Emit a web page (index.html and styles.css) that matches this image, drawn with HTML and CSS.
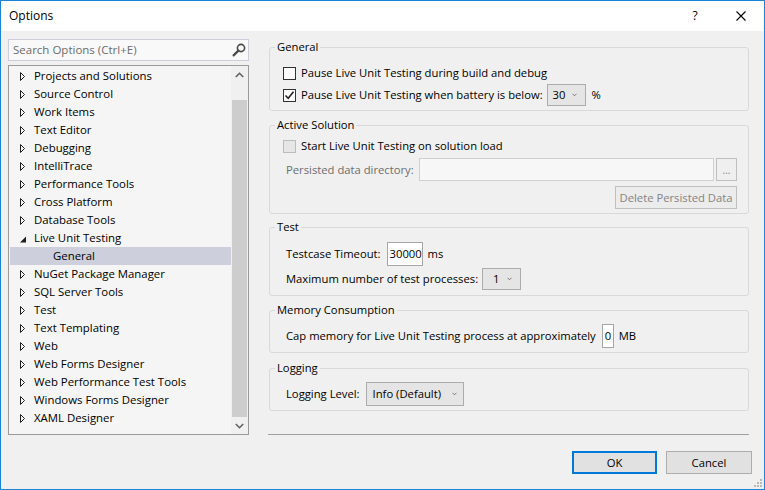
FILE: index.html
```html
<!DOCTYPE html>
<html>
<head>
<meta charset="utf-8">
<title>Options</title>
<link rel="stylesheet" href="styles.css">
</head>
<body>
<div class="window">
  <div class="titlebar">
    <span class="title">Options</span>
    <div class="caption-btns">
      <span class="cap-btn help">?</span>
      <span class="cap-btn">
        <svg width="10" height="10" viewBox="0 0 10 10"><path d="M0.5 0.5L9.5 9.5M9.5 0.5L0.5 9.5" stroke="#000" stroke-width="1.1" fill="none"/></svg>
      </span>
    </div>
  </div>

  <div class="content">
    <div class="main">
      <div class="left">
        <div class="search">
          <span class="placeholder">Search Options (Ctrl+E)</span>
          <svg class="search-icon" width="14" height="14" viewBox="0 0 14 14"><circle cx="9" cy="5" r="3.6" stroke="#4a4a4a" stroke-width="1.6" fill="none"/><path d="M6.4 7.6L1.6 12.4" stroke="#4a4a4a" stroke-width="2.2" stroke-linecap="round"/></svg>
        </div>
        <div class="tree">
          <div class="rows">
            <div class="row"><span class="tri"><svg width="6" height="9" viewBox="0 0 6 9"><path d="M0.5 0.5L4.5 4.5L0.5 8.5Z" stroke="#1e1e1e" fill="none"/></svg></span>Projects and Solutions</div>
            <div class="row"><span class="tri"><svg width="6" height="9" viewBox="0 0 6 9"><path d="M0.5 0.5L4.5 4.5L0.5 8.5Z" stroke="#1e1e1e" fill="none"/></svg></span>Source Control</div>
            <div class="row"><span class="tri"><svg width="6" height="9" viewBox="0 0 6 9"><path d="M0.5 0.5L4.5 4.5L0.5 8.5Z" stroke="#1e1e1e" fill="none"/></svg></span>Work Items</div>
            <div class="row"><span class="tri"><svg width="6" height="9" viewBox="0 0 6 9"><path d="M0.5 0.5L4.5 4.5L0.5 8.5Z" stroke="#1e1e1e" fill="none"/></svg></span>Text Editor</div>
            <div class="row"><span class="tri"><svg width="6" height="9" viewBox="0 0 6 9"><path d="M0.5 0.5L4.5 4.5L0.5 8.5Z" stroke="#1e1e1e" fill="none"/></svg></span>Debugging</div>
            <div class="row"><span class="tri"><svg width="6" height="9" viewBox="0 0 6 9"><path d="M0.5 0.5L4.5 4.5L0.5 8.5Z" stroke="#1e1e1e" fill="none"/></svg></span>IntelliTrace</div>
            <div class="row"><span class="tri"><svg width="6" height="9" viewBox="0 0 6 9"><path d="M0.5 0.5L4.5 4.5L0.5 8.5Z" stroke="#1e1e1e" fill="none"/></svg></span>Performance Tools</div>
            <div class="row"><span class="tri"><svg width="6" height="9" viewBox="0 0 6 9"><path d="M0.5 0.5L4.5 4.5L0.5 8.5Z" stroke="#1e1e1e" fill="none"/></svg></span>Cross Platform</div>
            <div class="row"><span class="tri"><svg width="6" height="9" viewBox="0 0 6 9"><path d="M0.5 0.5L4.5 4.5L0.5 8.5Z" stroke="#1e1e1e" fill="none"/></svg></span>Database Tools</div>
            <div class="row"><span class="tri"><svg width="6" height="9" viewBox="0 0 6 9"><path d="M6 2.5L6 8.5L0 8.5Z" fill="#1e1e1e"/></svg></span>Live Unit Testing</div>
            <div class="row child selected">General</div>
            <div class="row"><span class="tri"><svg width="6" height="9" viewBox="0 0 6 9"><path d="M0.5 0.5L4.5 4.5L0.5 8.5Z" stroke="#1e1e1e" fill="none"/></svg></span>NuGet Package Manager</div>
            <div class="row"><span class="tri"><svg width="6" height="9" viewBox="0 0 6 9"><path d="M0.5 0.5L4.5 4.5L0.5 8.5Z" stroke="#1e1e1e" fill="none"/></svg></span>SQL Server Tools</div>
            <div class="row"><span class="tri"><svg width="6" height="9" viewBox="0 0 6 9"><path d="M0.5 0.5L4.5 4.5L0.5 8.5Z" stroke="#1e1e1e" fill="none"/></svg></span>Test</div>
            <div class="row"><span class="tri"><svg width="6" height="9" viewBox="0 0 6 9"><path d="M0.5 0.5L4.5 4.5L0.5 8.5Z" stroke="#1e1e1e" fill="none"/></svg></span>Text Templating</div>
            <div class="row"><span class="tri"><svg width="6" height="9" viewBox="0 0 6 9"><path d="M0.5 0.5L4.5 4.5L0.5 8.5Z" stroke="#1e1e1e" fill="none"/></svg></span>Web</div>
            <div class="row"><span class="tri"><svg width="6" height="9" viewBox="0 0 6 9"><path d="M0.5 0.5L4.5 4.5L0.5 8.5Z" stroke="#1e1e1e" fill="none"/></svg></span>Web Forms Designer</div>
            <div class="row"><span class="tri"><svg width="6" height="9" viewBox="0 0 6 9"><path d="M0.5 0.5L4.5 4.5L0.5 8.5Z" stroke="#1e1e1e" fill="none"/></svg></span>Web Performance Test Tools</div>
            <div class="row"><span class="tri"><svg width="6" height="9" viewBox="0 0 6 9"><path d="M0.5 0.5L4.5 4.5L0.5 8.5Z" stroke="#1e1e1e" fill="none"/></svg></span>Windows Forms Designer</div>
            <div class="row"><span class="tri"><svg width="6" height="9" viewBox="0 0 6 9"><path d="M0.5 0.5L4.5 4.5L0.5 8.5Z" stroke="#1e1e1e" fill="none"/></svg></span>XAML Designer</div>
          </div>
          <div class="vscroll">
            <div class="sb-btn"><svg width="9" height="6" viewBox="0 0 9 6"><path d="M0.8 5L4.5 1.3L8.2 5" stroke="#606060" stroke-width="1.6" fill="none"/></svg></div>
            <div class="sb-track"><div class="sb-thumb"></div></div>
            <div class="sb-btn"><svg width="9" height="6" viewBox="0 0 9 6"><path d="M0.8 1L4.5 4.7L8.2 1" stroke="#606060" stroke-width="1.6" fill="none"/></svg></div>
          </div>
        </div>
      </div>

      <div class="right">
        <fieldset class="group g-general">
          <legend>General</legend>
          <div class="gbody">
            <div class="line">
              <span class="cb"></span>
              <span>Pause Live Unit Testing during build and debug</span>
            </div>
            <div class="line">
              <span class="cb"><svg width="11" height="11" viewBox="0 0 11 11"><path d="M1.5 5.5L4.2 8.3L9.5 1.8" stroke="#1e1e1e" stroke-width="1.5" fill="none"/></svg></span>
              <span>Pause Live Unit Testing when battery is below:</span>
              <span class="combo combo-30"><span>30</span><svg class="chev" width="5" height="4" viewBox="0 0 5 4"><path d="M0.5 0.8L2.5 2.8L4.5 0.8" stroke="#777" stroke-width="1" fill="none"/></svg></span>
              <span class="unit-pct">%</span>
            </div>
          </div>
        </fieldset>

        <fieldset class="group g-active">
          <legend>Active Solution</legend>
          <div class="gbody">
            <div class="line">
              <span class="cb disabled"></span>
              <span>Start Live Unit Testing on solution load</span>
            </div>
            <div class="line line-dir">
              <span class="lbl muted">Persisted data directory:</span>
              <span class="dir-input"></span>
              <span class="btn-dots">...</span>
            </div>
            <div class="line line-del">
              <span class="btn-disabled">Delete Persisted Data</span>
            </div>
          </div>
        </fieldset>

        <fieldset class="group g-test">
          <legend>Test</legend>
          <div class="gbody">
            <div class="line line24">
              <span class="lbl">Testcase Timeout:</span>
              <span class="textbox tb-timeout">30000</span>
              <span class="unit">ms</span>
            </div>
            <div class="line line-proc">
              <span class="lbl">Maximum number of test processes:</span>
              <span class="combo combo-1"><span>1</span><svg class="chev" width="5" height="4" viewBox="0 0 5 4"><path d="M0.5 0.8L2.5 2.8L4.5 0.8" stroke="#777" stroke-width="1" fill="none"/></svg></span>
            </div>
          </div>
        </fieldset>

        <fieldset class="group g-memory">
          <legend>Memory Consumption</legend>
          <div class="gbody">
            <div class="line line24">
              <span class="lbl">Cap memory for Live Unit Testing process at approximately</span>
              <span class="textbox tb-mem">0</span>
              <span class="unit">MB</span>
            </div>
          </div>
        </fieldset>

        <fieldset class="group g-logging">
          <legend>Logging</legend>
          <div class="gbody">
            <div class="line line24">
              <span class="lbl">Logging Level:</span>
              <span class="combo combo-log"><span>Info (Default)</span><svg class="chev" width="5" height="4" viewBox="0 0 5 4"><path d="M0.5 0.8L2.5 2.8L4.5 0.8" stroke="#777" stroke-width="1" fill="none"/></svg></span>
            </div>
          </div>
        </fieldset>

        <div class="separator"></div>
      </div>
    </div>

    <div class="footer">
      <span class="button default">OK</span>
      <span class="button">Cancel</span>
    </div>
  </div>

  <svg class="grip" width="9" height="9" viewBox="0 0 9 9">
    <rect x="7" y="1" width="2" height="2" fill="#b8b8b8"/>
    <rect x="4" y="4" width="2" height="2" fill="#b8b8b8"/>
    <rect x="7" y="4" width="2" height="2" fill="#b8b8b8"/>
    <rect x="1" y="7" width="2" height="2" fill="#b8b8b8"/>
    <rect x="4" y="7" width="2" height="2" fill="#b8b8b8"/>
    <rect x="7" y="7" width="2" height="2" fill="#b8b8b8"/>
  </svg>
</div>
</body>
</html>
```

FILE: styles.css
```css
html, body {
  margin: 0;
  padding: 0;
  overflow: hidden;
  background: #f0f0f0;
}

body {
  font-family: "Open Sans", "Noto Sans", "Liberation Sans", sans-serif;
  font-size: 11.25px;
  line-height: 16px;
  color: #000;
}

.window {
  position: relative;
  width: 765px;
  height: 490px;
  box-sizing: border-box;
  border: 1px solid #1883d7;
  background: #f0f0f0;
  display: flex;
  flex-direction: column;
}

/* Title bar */
.titlebar {
  height: 30px;
  background: #fff;
  display: flex;
  align-items: center;
  padding-left: 8px;
  flex: none;
}
.title {
  font-size: 12px;
  flex: 1;
}
.caption-btns {
  display: flex;
  height: 30px;
}
.cap-btn {
  width: 46px;
  height: 30px;
  display: flex;
  align-items: center;
  justify-content: center;
}
.help {
  font-size: 12px;
}

/* Content */
.content {
  flex: 1;
  padding: 8px 12px 0 7px;
  display: flex;
  flex-direction: column;
}
.main {
  display: flex;
  gap: 19px;
}
.left {
  width: 241px;
  flex: none;
  display: flex;
  flex-direction: column;
}
.search {
  height: 22px;
  box-sizing: border-box;
  border: 1px solid #cccedb;
  background: #f9f9f9;
  display: flex;
  align-items: center;
  padding-left: 4px;
  padding-right: 2px;
}
.placeholder {
  flex: 1;
  color: #6d6d6d;
  font-size: 11.5px;
}
.search-icon {
  display: block;
  margin-top: -1px;
}

.tree {
  margin-top: 4px;
  height: 370px;
  box-sizing: border-box;
  border: 1px solid #9a9a9a;
  background: #f5f5f5;
  display: flex;
}
.rows {
  flex: 1;
  padding: 1px 0 0 1px;
  font-size: 11.4px;
}
.row {
  height: 18px;
  display: flex;
  align-items: center;
  padding-left: 10px;
  white-space: nowrap;
}
.row .tri {
  width: 6px;
  height: 9px;
  margin-right: 8px;
  display: flex;
}
.row.child {
  padding-left: 43px;
}
.row.selected {
  background: #cdd0dc;
}

.vscroll {
  width: 17px;
  display: flex;
  flex-direction: column;
  background: #f0f0f0;
}
.sb-btn {
  height: 17px;
  display: flex;
  align-items: center;
  justify-content: center;
}
.sb-track {
  flex: 1;
  padding-top: 17px;
  display: flex;
  flex-direction: column;
}
.sb-thumb {
  flex: 1;
  margin: 0 1px;
  background: #cdcdcd;
}

/* Right pane */
.right {
  width: 481px;
  flex: none;
  display: flex;
  flex-direction: column;
}
.group {
  margin: 0 0 0 1px;
  padding: 0;
  min-width: 0;
  border: 1px solid #d9d9d9;
  border-radius: 3px;
}
.group legend {
  margin-left: 5px;
  padding: 0 2px;
  line-height: 16px;
  height: 16px;
}
.gbody {
  padding: 0 11px 4px 13px;
}
.g-general .gbody { padding-top: 7px; }
.g-active { margin-top: 6px; }
.g-active .gbody { padding-top: 2px; }
.g-test { margin-top: 5px; }
.g-test .gbody { padding-top: 7px; padding-bottom: 5px; }
.g-memory { margin-top: 6px; }
.g-memory .gbody { padding-top: 6px; }
.g-logging { margin-top: 7px; }
.g-logging .gbody { padding-top: 6px; }

.line {
  height: 22px;
  display: flex;
  align-items: center;
  white-space: nowrap;
}
.line24 { height: 24px; }

.cb {
  width: 13px;
  height: 13px;
  box-sizing: border-box;
  border: 1px solid #333;
  background: #fff;
  margin-right: 5px;
  display: flex;
  align-items: center;
  justify-content: center;
  flex: none;
}
.cb.disabled {
  border-color: #bcbcbc;
  background: #e6e6e6;
}

.lbl { margin-left: 3px; }
.muted { color: #6d6d6d; }

.combo {
  height: 22px;
  box-sizing: border-box;
  border: 1px solid #acacac;
  background: #e5e5e5;
  display: flex;
  align-items: center;
  padding-left: 5px;
}
.combo .chev {
  margin-left: auto;
  margin-right: 8px;
}
.combo-30 {
  width: 39px;
  margin-left: 4px;
}
.unit-pct { margin-left: 6px; }

.line-dir {
  height: 23px;
  margin-top: 1px;
}
.dir-input {
  flex: 1;
  height: 23px;
  box-sizing: border-box;
  margin-left: 5px;
  border: 1px solid #d0d0d0;
  background: #f7f7f7;
}
.btn-dots {
  width: 21px;
  height: 23px;
  box-sizing: border-box;
  margin-left: 2px;
  border: 1px solid #bfbfbf;
  background: #efefef;
  color: #838383;
  display: flex;
  align-items: center;
  justify-content: center;
  font-size: 10px;
}
.line-del {
  height: 23px;
  margin-top: 5px;
  justify-content: flex-end;
}
.btn-disabled {
  width: 122px;
  height: 23px;
  box-sizing: border-box;
  border: 1px solid #bfbfbf;
  background: #ececec;
  color: #838383;
  display: flex;
  align-items: center;
  justify-content: center;
}

.textbox {
  height: 24px;
  box-sizing: border-box;
  border: 1px solid #a6a6a6;
  background: #fff;
  display: flex;
  align-items: center;
  margin-left: 6px;
}
.tb-timeout {
  width: 36px;
  padding-left: 2px;
}
.tb-mem {
  width: 12px;
  padding-left: 2px;
}
.unit { margin-left: 5px; }

.line-proc {
  margin-top: 2px;
}
.combo-1 {
  width: 39px;
  margin-left: 4px;
  padding-left: 10px;
}
.combo-log {
  width: 98px;
  height: 24px;
  margin-left: 6px;
  padding-left: 6px;
}
.combo-log .chev { margin-right: 6px; }

.separator {
  margin-top: 23px;
  height: 1px;
  background: #a0a0a0;
}

/* Footer */
.footer {
  margin-top: 16px;
  display: flex;
  justify-content: flex-end;
  gap: 9px;
}
.button {
  width: 86px;
  height: 23px;
  box-sizing: border-box;
  border: 1px solid #adadad;
  background: #e1e1e1;
  display: flex;
  align-items: center;
  justify-content: center;
}
.button.default {
  width: 85px;
  border: 2px solid #0078d7;
}

.grip {
  position: absolute;
  right: 2px;
  bottom: 2px;
}
```
